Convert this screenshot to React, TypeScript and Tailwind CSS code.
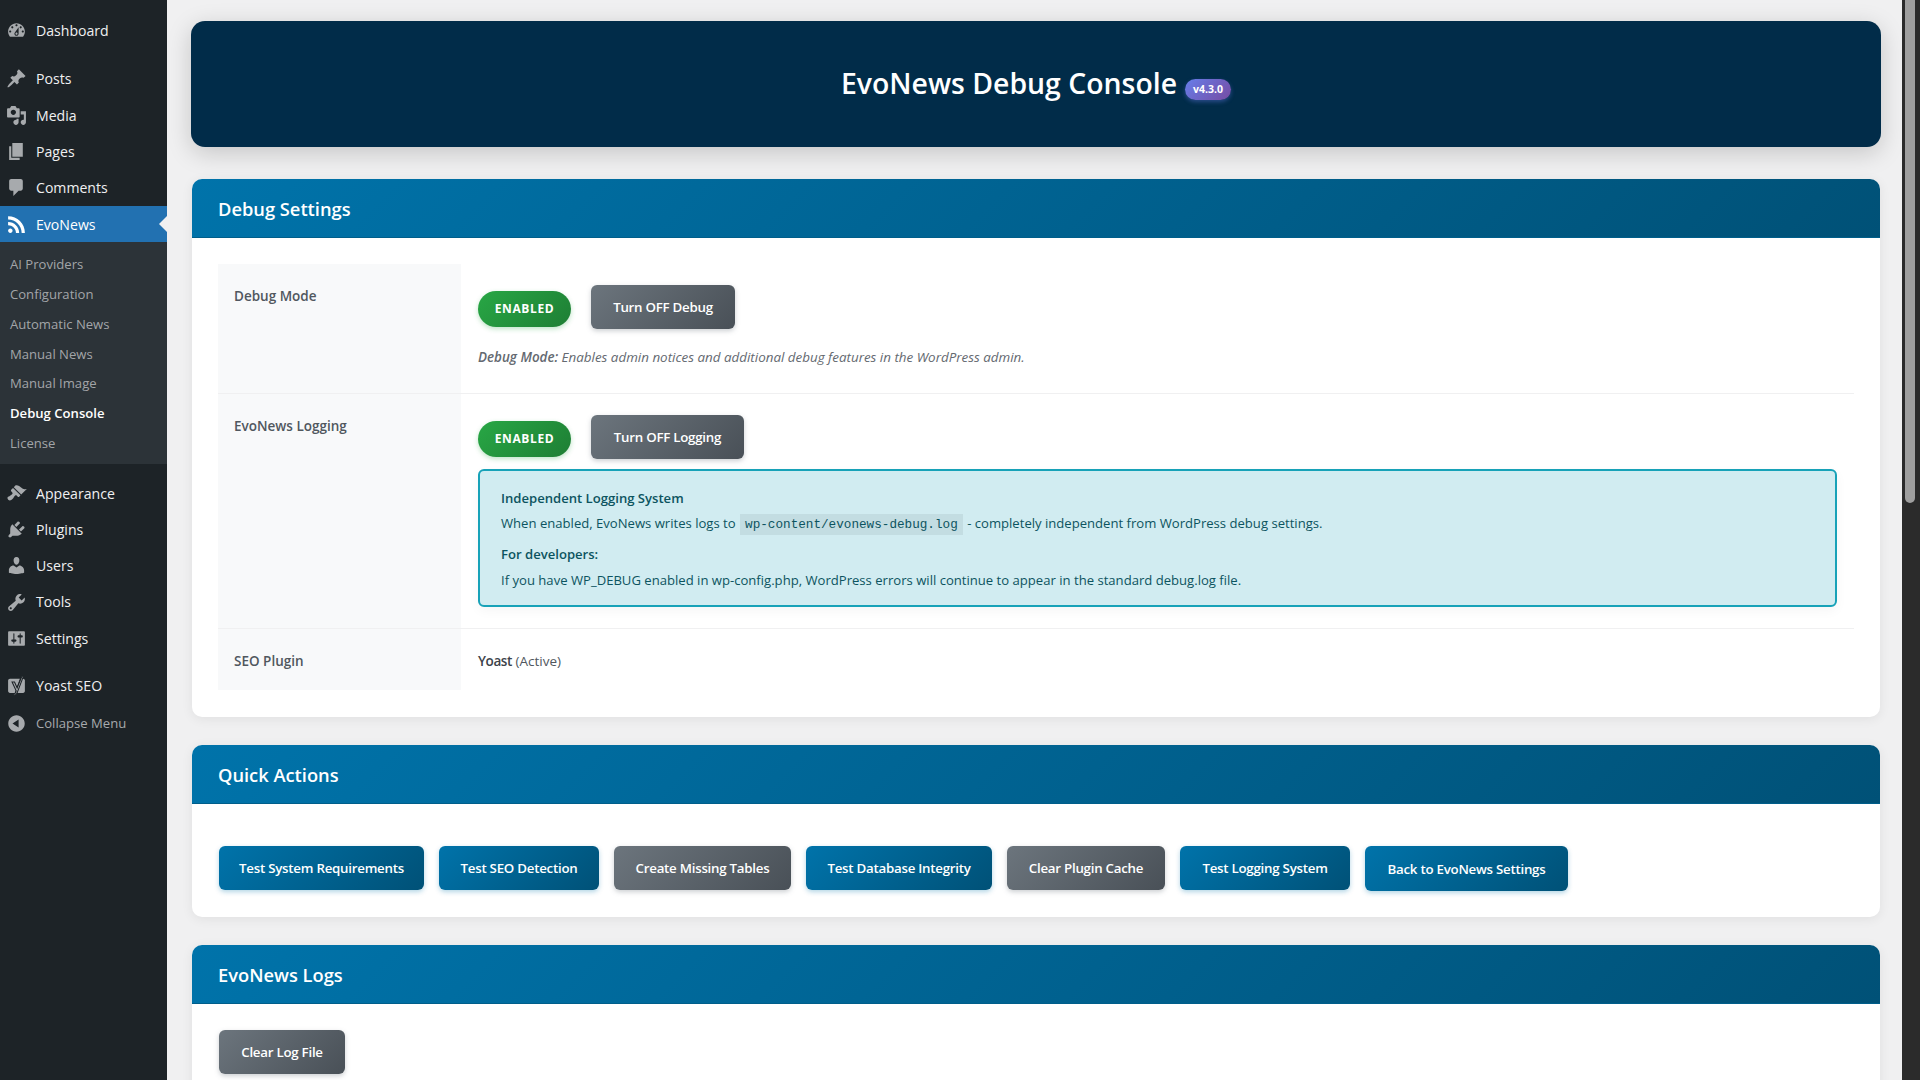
import React from 'react';

const ICONS: Record<string, string> = {
  dashboard: 'M3.76 16h12.48c1.1-1.37 1.76-3.11 1.76-5 0-4.42-3.58-8-8-8s-8 3.58-8 8c0 1.89.66 3.63 1.76 5zM10 4c.55 0 1 .45 1 1s-.45 1-1 1-1-.45-1-1 .45-1 1-1zM6 6c.55 0 1 .45 1 1s-.45 1-1 1-1-.45-1-1 .45-1 1-1zm8 0c.55 0 1 .45 1 1s-.45 1-1 1-1-.45-1-1 .45-1 1-1zm-5.37 5.55L12 7v6c0 1.1-.9 2-2 2s-2-.9-2-2c0-.57.24-1.08.63-1.45zM4 10c.55 0 1 .45 1 1s-.45 1-1 1-1-.45-1-1 .45-1 1-1zm12 0c.55 0 1 .45 1 1s-.45 1-1 1-1-.45-1-1 .45-1 1-1zm-5 3c0-.55-.45-1-1-1s-1 .45-1 1 .45 1 1 1 1-.45 1-1z',
  posts: 'M10.44 3.02l1.82-1.82 6.36 6.35-1.83 1.82c-1.05-.68-2.48-.57-3.41.36l-.75.75c-.92.93-1.04 2.35-.35 3.41l-1.83 1.82-2.41-2.41-2.8 2.79c-.42.42-3.38 2.71-3.8 2.29s1.86-3.39 2.28-3.81l2.79-2.79L4.1 9.36l1.83-1.82c1.05.69 2.48.57 3.4-.36l.75-.75c.93-.92 1.05-2.35.36-3.41z',
  media: 'M13 11V4c0-.55-.45-1-1-1h-1.67L9 1H5L3.67 3H2c-.55 0-1 .45-1 1v7c0 .55.45 1 1 1h10c.55 0 1-.45 1-1zM7 4.5c1.38 0 2.5 1.12 2.5 2.5S8.38 9.5 7 9.5 4.5 8.38 4.5 7 5.62 4.5 7 4.5zM14 6h5v10.5c0 1.38-1.12 2.5-2.5 2.5S14 17.88 14 16.5s1.12-2.5 2.5-2.5c.17 0 .34.02.5.05V9h-3V6zm-4 8.05V13h2v3.5c0 1.38-1.12 2.5-2.5 2.5S7 17.88 7 16.5 8.12 14 9.5 14c.17 0 .34.02.5.05z',
  pages: 'M6 15V2h10v13H6zm-1 1h8v2H3V5h2v11z',
  comments: 'M5 2h9c1.1 0 2 .9 2 2v7c0 1.1-.9 2-2 2h-2l-5 5v-5H5c-1.1 0-2-.9-2-2V4c0-1.1.9-2 2-2z',
  rss: 'M14.92 18H18C18 9.32 10.82 2.25 2 2.25v3.02c7.12 0 12.92 5.71 12.92 12.73zm-5.44 0h3.08C12.56 12.27 7.82 7.6 2 7.6v3.02c2 0 3.87.77 5.29 2.16C8.7 14.17 9.48 16.03 9.48 18zm-5.35-.02c1.17 0 2.13-.93 2.13-2.09 0-1.15-.96-2.09-2.13-2.09-1.18 0-2.13.94-2.13 2.09 0 1.16.95 2.09 2.13 2.09z',
  appearance: 'M14.48 11.06L7.41 3.99l1.5-1.5c.5-.56 2.3-.47 3.51.32 1.21.8 1.43 1.28 2.91 2.1 1.18.64 2.45 1.26 4.45.85zm-.71.71L6.7 4.7 4.93 6.47c-.39.39-.39 1.02 0 1.41l1.06 1.06c.39.39.39 1.03 0 1.42-.6.6-1.43 1.11-2.21 1.69-.35.26-.7.53-1.01.84C1.43 13.01.8 14.6 2.1 15.9s2.89.67 4.1-.66c.31-.31.58-.66.84-1.01.58-.78 1.09-1.61 1.69-2.21.39-.39 1.03-.39 1.42 0l1.06 1.06c.39.39 1.02.39 1.41 0z',
  plugins: 'M13.11 4.36L9.87 7.6 8 5.73l3.24-3.24c.35-.34 1.05-.2 1.56.32.52.51.66 1.21.31 1.55zm-8 1.77l.91-1.12 9.01 9.01-1.19.84c-.71.71-2.63 1.16-3.82 1.16H6.14L4.9 17.26c-.59.59-1.54.59-2.12 0-.59-.58-.59-1.53 0-2.12l1.24-1.24v-3.88c0-1.13.4-3.19 1.09-3.89zm7.26 3.97l3.24-3.24c.34-.35 1.04-.21 1.55.31.52.51.66 1.21.31 1.55l-3.24 3.25z',
  users: 'M10 9.25c-2.27 0-2.73-3.44-2.73-3.44C7 4.02 7.82 2 9.97 2c2.16 0 2.98 2.02 2.71 3.81 0 0-.41 3.44-2.68 3.44zm0 2.57L12.72 10c2.39 0 4.52 2.33 4.52 4.53v2.49s-3.65 1.13-7.24 1.13c-3.65 0-7.24-1.13-7.24-1.13v-2.49c0-2.25 1.94-4.48 4.47-4.48z',
  tools: 'M16.68 9.77c-1.34 1.34-3.3 1.67-4.95.99l-5.41 6.52c-.99.99-2.59.99-3.58 0s-.99-2.59 0-3.57l6.52-5.42c-.68-1.65-.35-3.61.99-4.95 1.28-1.28 3.12-1.62 4.72-1.06l-2.89 2.89 2.82 2.82 2.86-2.87c.53 1.58.18 3.39-1.08 4.65zM3.81 16.21c.4.39 1.04.39 1.43 0 .4-.4.4-1.04 0-1.43-.39-.4-1.03-.4-1.43 0-.39.39-.39 1.03 0 1.43z',
  settings: 'M18 16V4c0-.55-.45-1-1-1H3c-.55 0-1 .45-1 1v12c0 .55.45 1 1 1h14c.55 0 1-.45 1-1zM8 11h1c.55 0 1 .45 1 1s-.45 1-1 1H8v1.5c0 .28-.22.5-.5.5s-.5-.22-.5-.5V13H6c-.55 0-1-.45-1-1s.45-1 1-1h1V5.5c0-.28.22-.5.5-.5s.5.22.5.5V11zm5-2h-1c-.55 0-1-.45-1-1s.45-1 1-1h1V5.5c0-.28.22-.5.5-.5s.5.22.5.5V7h1c.55 0 1 .45 1 1s-.45 1-1 1h-1v5.5c0 .28-.22.5-.5.5s-.5-.22-.5-.5V9z',
  collapse: 'M10 2.16c4.33 0 7.84 3.51 7.84 7.84s-3.51 7.84-7.84 7.84S2.16 14.33 2.16 10 5.71 2.16 10 2.16zm2 11.72V6.12L6.18 9.97z',
};

function MenuIcon({ name, active }: { name: string; active?: boolean }) {
  if (name === 'yoast') {
    // logo: rounded tile with a y cut out and the slash running over the top
    return (
      <svg viewBox="0 0 20 20" className="w-[21px] h-[21px] shrink-0 text-[#a7aaad]" fill="currentColor">
        <path d="M3.8 3.5h9.4l-4.9 13.600H3.800c-1 0-1.800-.8-1.800-1.800V5.300c0-1 .8-1.800 1.800-1.800z" />
        <path d="M14.800 3.500h1.400c1 0 1.800.8 1.800 1.800v10c0 1-.8 1.800-1.800 1.800H10.500z" />
        <path d="M15.200 1l1.300.5-5.900 15.500c-.5 1.300-1.600 2.100-3 2.300l-.2-1.200c1.100-.3 1.700-.9 2-1.800L9.700 15l-3.900-8.300h2.300l2.500 5.500z" stroke="#1d2327" strokeWidth="1" />
      </svg>
    );
  }
  return (
    <svg viewBox="0 0 20 20" className={`w-[21px] h-[21px] shrink-0 ${active ? 'text-white' : 'text-[#a7aaad]'}`} fill="currentColor">
      <path d={ICONS[name]} />
    </svg>
  );
}

function MenuItem({ icon, label, active, muted }: { icon: string; label: string; active?: boolean; muted?: boolean }) {
  const tone = active ? 'bg-[#2271b1] text-white text-[14.1px]' : muted ? 'text-[#a7aaad] text-[13.1px]' : 'text-[#f0f0f1] text-[14.1px]';
  return (
    <div className={`relative flex items-center h-[36.3px] pl-[6px] gap-[9px] ${tone}`}>
      <MenuIcon name={icon} active={active} />
      <span>{label}</span>
      {active && (
        <span className="absolute right-0 top-1/2 -translate-y-1/2 border-y-[8px] border-y-transparent border-r-[8px] border-r-[#f0f0f1]" />
      )}
    </div>
  );
}

const SUBMENU = ['AI Providers', 'Configuration', 'Automatic News', 'Manual News', 'Manual Image', 'Debug Console', 'License'];

function Sidebar() {
  return (
    <aside className="w-[167px] shrink-0 bg-[#1d2327] pt-[12px]">
      <MenuItem icon="dashboard" label="Dashboard" />
      <div className="mt-[12.5px]">
        <MenuItem icon="posts" label="Posts" />
        <MenuItem icon="media" label="Media" />
        <MenuItem icon="pages" label="Pages" />
        <MenuItem icon="comments" label="Comments" />
        <MenuItem icon="rss" label="EvoNews" active />
      </div>
      <div className="bg-[#2c3338] pt-[7.5px] pb-[5px]">
        {SUBMENU.map((s) => (
          <div key={s} className={`h-[29.9px] flex items-center pl-[10px] text-[13.1px] ${s === 'Debug Console' ? 'text-white font-semibold' : 'text-[#c3c4c7]/80'}`}>
            {s}
          </div>
        ))}
      </div>
      <div className="mt-[11px]">
        <MenuItem icon="appearance" label="Appearance" />
        <MenuItem icon="plugins" label="Plugins" />
        <MenuItem icon="users" label="Users" />
        <MenuItem icon="tools" label="Tools" />
        <MenuItem icon="settings" label="Settings" />
      </div>
      <div className="mt-[11px]">
        <MenuItem icon="yoast" label="Yoast SEO" />
      </div>
      <div className="mt-[1.5px]">
        <MenuItem icon="collapse" label="Collapse Menu" muted />
      </div>
    </aside>
  );
}

function Btn({ label, gray, className }: { label: string; gray?: boolean; className: string }) {
  return (
    <button
      className={`shrink-0 pt-[2px] rounded-[6px] text-white text-[13.3px] tracking-[-0.25px] font-semibold whitespace-nowrap ${
        gray
          ? 'bg-[linear-gradient(135deg,#6c757d,#495057)] shadow-[0_2px_5px_rgba(108,117,125,0.35)]'
          : 'bg-[linear-gradient(135deg,#0073aa,#005177)] shadow-[0_2px_5px_rgba(0,115,170,0.3)]'
      } ${className}`}
    >
      {label}
    </button>
  );
}

function Pill() {
  return (
    <span className="inline-flex items-center justify-center w-[93px] h-[36px] mt-[4px] rounded-full bg-[linear-gradient(135deg,#28a745,#1e7e34)] text-white text-[12px] font-bold tracking-[0.6px] shadow-[0_2px_5px_rgba(40,167,69,0.3)]">
      ENABLED
    </span>
  );
}

function Card({ title, children }: { title: string; children: React.ReactNode }) {
  return (
    <section className="mx-px bg-white rounded-[10px] overflow-hidden shadow-[0_2px_12px_rgba(0,0,0,0.07)]">
      <div className="h-[59px] flex items-center pl-[26px] pt-[1px] bg-[linear-gradient(135deg,#0073aa,#005177)] border-b border-[#005e8a]">
        <h2 className="text-white text-[18.3px] font-semibold">{title}</h2>
      </div>
      {children}
    </section>
  );
}

function Row({ label, className, children, last }: { label: string; className: string; children: React.ReactNode; last?: boolean }) {
  return (
    <div className={`flex ${last ? '' : 'border-b border-[#f0f0f1]'} ${className}`}>
      <div className="w-[243px] shrink-0 bg-[#f8f9fa] px-[16px] text-[13.5px] font-semibold text-[#50575e] pt-[22px]">{label}</div>
      <div className="flex-1 px-[17px]">{children}</div>
    </div>
  );
}

export default function App() {
  return (
    <div className="flex h-screen overflow-hidden bg-[#f0f0f1] font-['Open_Sans',sans-serif] text-[#3c434a]">
      <Sidebar />
      <main className="flex-1 min-w-0 pl-[24px] pr-[21px] pt-[21px]">
        <header className="h-[126px] rounded-[14px] bg-[#012c49] flex items-center justify-center shadow-[0_6px_24px_rgba(0,0,0,0.18)]">
          <h1 className="text-white text-[28.4px] font-semibold pb-[2px]">EvoNews Debug Console</h1>
          <span className="ml-[8px] mt-[11px] w-[46px] h-[21px] rounded-full flex items-center justify-center bg-[linear-gradient(135deg,#667eea,#764ba2)] text-white text-[10.5px] font-bold shadow-[0_2px_4px_rgba(102,126,234,0.4)]">
            v4.3.0
          </span>
        </header>

        <div className="mt-[32px]">
          <Card title="Debug Settings">
            <div className="px-[26px] pt-[26px] pb-[27px]">
              <Row label="Debug Mode" className="h-[130px]">
                <div className="flex items-center gap-[20px] mt-[21px]">
                  <Pill />
                  <Btn gray label="Turn OFF Debug" className="w-[144px] h-[44px]" />
                </div>
                <p className="mt-[18px] text-[13.4px] italic text-[#646970]">
                  <b className="font-semibold">Debug Mode:</b> Enables admin notices and additional debug features in the WordPress admin.
                </p>
              </Row>
              <Row label="EvoNews Logging" className="h-[235px]">
                <div className="flex items-center gap-[20px] mt-[21px]">
                  <Pill />
                  <Btn gray label="Turn OFF Logging" className="w-[153px] h-[44px]" />
                </div>
                <div className="mt-[10px] h-[138px] rounded-[6px] border-2 border-[#17a2b8] bg-[#d1ecf1] text-[#0c5460] text-[13.1px] pl-[21px] pt-[15px] shadow-[0_4px_12px_rgba(0,0,0,0.04)]">
                  <p className="font-semibold leading-[24px]">Independent Logging System</p>
                  <p className="leading-[24px] mt-[1px]">
                    When enabled, EvoNews writes logs to{' '}
                    <code className="inline-block mx-[1px] px-[5px] h-[21px] leading-[21px] bg-[#c3dde2] font-['Liberation_Mono',monospace] text-[12.66px] align-middle">
                      wp-content/evonews-debug.log
                    </code>{' '}
                    - completely independent from WordPress debug settings.
                  </p>
                  <p className="font-semibold leading-[24px] mt-[7px]">For developers:</p>
                  <p className="leading-[24px] mt-[2px]">If you have WP_DEBUG enabled in wp-config.php, WordPress errors will continue to appear in the standard debug.log file.</p>
                </div>
              </Row>
              <Row label="SEO Plugin" className="h-[61px]" last>
                <p className="pt-[22px] text-[13.5px] text-[#50575e]">
                  <b className="font-semibold text-[#3c434a] tracking-[-0.4px]">Yoast</b> (Active)
                </p>
              </Row>
            </div>
          </Card>
        </div>

        <div className="mt-[28px]">
          <Card title="Quick Actions">
            <div className="flex items-start gap-[15px] pl-[27px] pt-[42px] h-[113px]">
              <Btn label="Test System Requirements" className="w-[205px] h-[44px]" />
              <Btn label="Test SEO Detection" className="w-[160px] h-[44px]" />
              <Btn gray label="Create Missing Tables" className="w-[177px] h-[44px]" />
              <Btn label="Test Database Integrity" className="w-[186px] h-[44px]" />
              <Btn gray label="Clear Plugin Cache" className="w-[158px] h-[44px]" />
              <Btn label="Test Logging System" className="w-[170px] h-[44px]" />
              <Btn label="Back to EvoNews Settings" className="w-[203px] h-[45px]" />
            </div>
          </Card>
        </div>

        <div className="mt-[28px]">
          <Card title="EvoNews Logs">
            <div className="pl-[27px] pt-[26px] pb-[40px]">
              <Btn gray label="Clear Log File" className="w-[126px] h-[44px]" />
            </div>
          </Card>
        </div>
      </main>
      <div className="w-[18px] shrink-0 bg-[#2b2b2b] pl-[3px] pr-[5px] h-screen">
        <div className="h-[503px] w-[10px] rounded-b-[5px] bg-[#9f9f9f]" />
      </div>
    </div>
  );
}
